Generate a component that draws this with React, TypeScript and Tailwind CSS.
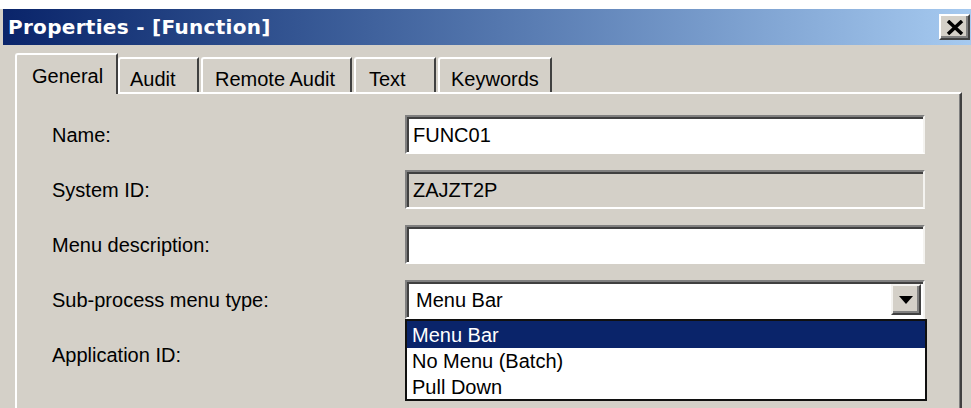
import React from "react";

const font = { fontFamily: '"Liberation Sans", Arial, sans-serif' };

type Tab = { label: string; width: string; pad: string; gap: string };

const tabs: Tab[] = [
  { label: "Audit", width: "w-[81px]", pad: "pl-[10px]", gap: "" },
  { label: "Remote Audit", width: "w-[151px]", pad: "pl-[12px]", gap: "ml-[2px]" },
  { label: "Text", width: "w-[82px]", pad: "pl-[13px]", gap: "ml-[2px]" },
  { label: "Keywords", width: "w-[114px]", pad: "pl-[11px]", gap: "ml-[2px]" },
];

function Field({ value, disabled }: { value: string; disabled?: boolean }) {
  return (
    <div
      className={`h-[39px] w-[520px] border-2 border-t-[#808080] border-l-[#808080] border-b-white border-r-[#f4f3f0] shadow-[inset_2px_2px_0_#404040] flex items-center pl-[6px] text-[20px] text-black ${
        disabled ? "bg-[#d4d0c8]" : "bg-white"
      }`}
    >
      {value}
    </div>
  );
}

function Combo() {
  return (
    <div className="relative h-[39px] w-[520px] border-2 border-t-[#808080] border-l-[#808080] border-b-white border-r-[#f4f3f0] shadow-[inset_2px_2px_0_#404040] bg-white flex items-center pl-[9px] text-[20px] text-black">
      Menu Bar
      <div className="absolute right-[2px] top-[2px] h-[31px] w-[30px] bg-[#d4d0c8] border-2 border-t-[#f4f3f0] border-l-[#f4f3f0] border-b-[#404040] border-r-[#404040] shadow-[inset_-2px_-2px_0_#808080] flex items-center justify-center">
        <svg width="14" height="8" viewBox="0 0 14 8">
          <path d="M0 0 H14 L7 8 Z" fill="#000" />
        </svg>
      </div>
      {/* open list of the combo */}
      <div className="absolute left-[-2px] top-[37px] w-[522px] h-[82px] bg-white border-2 border-[#101010] z-10 text-[20px] leading-[26px]">
        <div className="h-[27px] bg-[#0a246a] text-white pl-[5px] flex items-center">Menu Bar</div>
        <div className="pl-[5px]">No Menu (Batch)</div>
        <div className="pl-[5px]">Pull Down</div>
      </div>
    </div>
  );
}

export default function App() {
  return (
    <div className="w-[971px] h-[408px] overflow-hidden bg-[#d4d0c8] text-black" style={font}>
      <div className="h-[9px] bg-white" />
      <div className="ml-[3px] h-[36px] bg-gradient-to-r from-[#0a246a] to-[#a6caf0] flex items-center justify-between">
        <span
          className="pl-[5px] text-white font-bold text-[20px] tracking-[0.3px]"
          style={{ fontFamily: '"DejaVu Sans", Verdana, sans-serif' }}
        >
          Properties - [Function]
        </span>
        <div className="mr-[1px] h-[26px] w-[31px] bg-[#d4d0c8] border-2 border-t-white border-l-white border-b-[#404040] border-r-[#404040] shadow-[inset_-2px_-2px_0_#808080] flex items-center justify-center">
          <svg width="18" height="15" viewBox="0 0 18 15">
            <path d="M2 1 L16 14 M16 1 L2 14" stroke="#000" strokeWidth="3.5" />
          </svg>
        </div>
      </div>

      {/* tab strip */}
      <div className="h-[47px] pl-[15px] flex items-end">
        <div className="relative z-10 mb-[-2px] w-[103px] h-[41px] bg-[#d4d0c8] border-l-2 border-t-2 border-white border-r-2 border-r-[#404040] rounded-tl-[3px] pl-[15px] pt-[6px] text-[20px]">
          General
        </div>
        {tabs.map((t) => (
          <div
            key={t.label}
            className={`${t.width} ${t.pad} ${t.gap} h-[35px] bg-[#d4d0c8] border-l-2 border-t-2 border-white border-r-2 border-r-[#404040] rounded-tl-[3px] pt-[5px] text-[20px]`}
          >
            {t.label}
          </div>
        ))}
      </div>

      {/* tab page */}
      <div className="ml-[15px] w-[947px] h-[320px] border-t-2 border-l-2 border-white border-r-2 border-r-[#404040] shadow-[inset_-1px_0_0_#808080] pl-[35px] pt-[21px] text-[20px]">
        <div className="grid grid-cols-[353px_520px] items-center gap-y-[16px]">
          <span>Name:</span>
          <Field value="FUNC01" />
          <span>System ID:</span>
          <Field value="ZAJZT2P" disabled />
          <span>Menu description:</span>
          <Field value="" />
          <span>Sub-process menu type:</span>
          <Combo />
          <span>Application ID:</span>
          <Field value="" />
        </div>
      </div>
    </div>
  );
}
